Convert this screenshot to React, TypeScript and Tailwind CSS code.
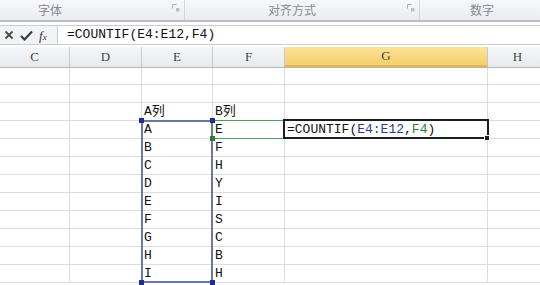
import React from 'react';

const cols = [
  { id: 'C', w: 70 },
  { id: 'D', w: 72 },
  { id: 'E', w: 71 },
  { id: 'F', w: 72 },
  { id: 'G', w: 203 },
  { id: 'H', w: 60 },
];

const colE = ['A', 'B', 'C', 'D', 'E', 'F', 'G', 'H', 'I'];
const colF = ['E', 'F', 'H', 'Y', 'I', 'S', 'C', 'B', 'H'];

const mono = { fontFamily: '"Liberation Mono", "Noto Sans CJK SC", monospace' };
const cjk = { fontFamily: '"Noto Sans CJK SC", "Noto Sans", sans-serif' };

const Launcher: React.FC = () => (
  <svg width="8" height="8" viewBox="0 0 8 8" className="mr-[4px] mt-[-4px]">
    <path d="M0.5 0.5h4M0.5 0.5v4" stroke="#a9b0ba" strokeWidth="1" fill="none" />
    <rect x="4" y="4" width="3.5" height="3.5" fill="#b9c0ca" />
  </svg>
);

// small square handle on a corner of a reference range
const Handle: React.FC<{ pos: string; color: string }> = ({ pos, color }) => (
  <span className={`absolute w-[5px] h-[5px] z-20 ${pos} ${color}`} />
);

function cellText(row: number, col: string): React.ReactNode {
  if (row === 3 && col === 'E') return 'A列';
  if (row === 3 && col === 'F') return 'B列';
  if (row >= 4 && row <= 12 && col === 'E') return colE[row - 4];
  if (row >= 4 && row <= 12 && col === 'F') return colF[row - 4];
  if (row === 4 && col === 'G')
    return (
      <>
        =COUNTIF(<span className="text-[#2d3a8c]">E4:E12</span>,<span className="text-[#2f7d3a]">F4</span>)
      </>
    );
  return null;
}

function Cell({ row, col, w }: { row: number; col: string; w: number }) {
  const inE = col === 'E' && row >= 4 && row <= 12;
  const isF4 = col === 'F' && row === 4;
  const isG4 = col === 'G' && row === 4;

  return (
    <div
      style={{ width: w }}
      className="relative shrink-0 border-r border-b border-[#dadcdf] flex items-end pl-[2px] leading-[16px] whitespace-nowrap"
    >
      {inE && (
        <span
          className={`absolute -left-[1px] -right-[1px] -top-[1px] bottom-[-1px] border-x-2 border-[#6878a6] z-10 ${
            row === 4 ? 'border-t-2' : ''
          } ${row === 12 ? 'border-b-2' : ''}`}
        />
      )}
      {inE && row === 4 && (
        <>
          <Handle pos="-left-[3px] -top-[3px]" color="bg-[#1e2c9c]" />
          <Handle pos="-right-[3px] -top-[3px]" color="bg-[#1e2c9c]" />
        </>
      )}
      {inE && row === 12 && (
        <>
          <Handle pos="-left-[3px] -bottom-[3px]" color="bg-[#1e2c9c]" />
          <Handle pos="-right-[3px] -bottom-[3px]" color="bg-[#1e2c9c]" />
        </>
      )}
      {isF4 && (
        <>
          <span className="absolute -left-[1px] -top-[1px] right-[-1px] bottom-[-1px] border border-[#4f9a5c] z-10" />
          <Handle pos="-left-[3px] -bottom-[3px]" color="bg-[#2e7a3c]" />
        </>
      )}
      {isG4 && (
        <>
          <span className="absolute -left-[2px] -top-[2px] right-[-2px] bottom-[-1px] border-2 border-[#1c1c1c] z-10" />
          <span className="absolute -right-[3px] -bottom-[3px] w-[6px] h-[6px] bg-[#1c1c1c] border border-white z-20" />
        </>
      )}
      <span className="relative">{cellText(row, col)}</span>
    </div>
  );
}

export default function App() {
  const rows = Array.from({ length: 12 }, (_, i) => i + 1);

  return (
    <div className="w-[540px] h-[285px] overflow-hidden bg-white">
      {/* Ribbon group labels */}
      <div
        className="h-[22px] flex text-[12px] text-[#858991] bg-gradient-to-b from-[#f7f8fa] to-[#e9ecf0] border-b-2 border-[#b9bec6]"
        style={cjk}
      >
        <div className="w-[185px] flex items-center justify-between pl-[38px] border-r border-[#d4d8de]">
          <span>字体</span>
          <Launcher />
        </div>
        <div className="w-[235px] flex items-center justify-between pl-[83px] border-r border-[#d4d8de]">
          <span>对齐方式</span>
          <Launcher />
        </div>
        <div className="flex-1 flex items-center pl-[50px]">
          <span>数字</span>
        </div>
      </div>

      {/* Formula bar */}
      <div className="mt-[3px] h-[20px] flex border-y border-[#c9cdd3] bg-[#f2f3f5]">
        <div className="w-[57px] flex items-center pl-[4px] gap-[6px]">
          <svg width="10" height="10" viewBox="0 0 10 10">
            <path d="M1.5 1.5l7 7M8.5 1.5l-7 7" stroke="#4a4a4a" strokeWidth="1.8" />
          </svg>
          <svg width="13" height="11" viewBox="0 0 13 11">
            <path d="M1 6l3.5 3.5L12 1.5" stroke="#3d3d3d" strokeWidth="2.2" fill="none" />
          </svg>
          <span className="text-[13px] italic leading-none text-[#333]" style={{ fontFamily: '"Liberation Serif", serif' }}>
            f<span className="text-[9px]">x</span>
          </span>
        </div>
        <div className="flex-1 bg-white border-l border-[#c9cdd3] flex items-center pl-[9px] text-[13px] text-[#111]" style={mono}>
          =COUNTIF(E4:E12,F4)
        </div>
      </div>

      {/* Column headers */}
      <div className="mt-[2px] h-[21px] flex border-b border-[#b3b8bf] text-[13px] text-[#444]" style={{ fontFamily: '"Liberation Serif", serif' }}>
        {cols.map(c => (
          <div
            key={c.id}
            style={{ width: c.w }}
            className={`shrink-0 flex items-center justify-center border-r border-[#c6cad0] ${
              c.id === 'G'
                ? 'bg-gradient-to-b from-[#fbe39a] to-[#f6cf69] border-b-2 border-b-[#e8b54a]'
                : 'bg-gradient-to-b from-[#f6f7f9] to-[#e6e9ed]'
            }`}
          >
            {c.id}
          </div>
        ))}
      </div>

      {/* Grid */}
      <div className="text-[13px] text-[#111]" style={mono}>
        {rows.map(r => (
          <div key={r} className={`flex ${r === 1 ? 'h-[17px]' : 'h-[18px]'}`}>
            {cols.map(c => (
              <Cell key={c.id} row={r} col={c.id} w={c.w} />
            ))}
          </div>
        ))}
      </div>
    </div>
  );
}
